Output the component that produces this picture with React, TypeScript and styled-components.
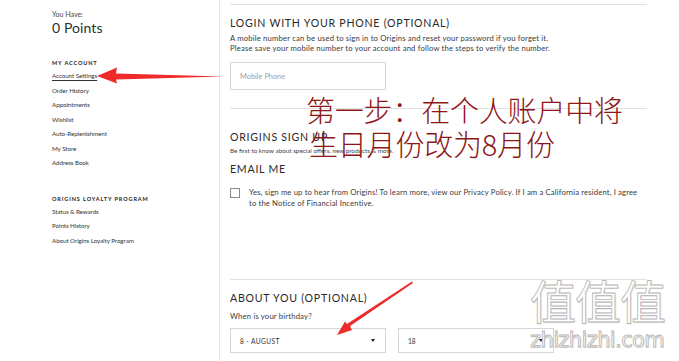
import React from 'react';
import styled, { createGlobalStyle } from 'styled-components';

const GlobalStyle = createGlobalStyle`
  html, body {
    margin: 0;
    padding: 0;
    background: #ffffff;
  }
  body {
    font-family: Lato, "Open Sans", "Liberation Sans", sans-serif;
    color: #333333;
    overflow: hidden;
  }
`;

// Page layout
const Page = styled.div`
  position: relative;
  display: flex;
  width: 679px;
  height: 361px;
  overflow: hidden;
`;

const Sidebar = styled.aside`
  width: 220px;
  flex-shrink: 0;
  box-sizing: border-box;
  padding: 10px 0 0 52px;
  border-right: 1px solid #e6e6e6;
`;

const Main = styled.main`
  width: 417px;
  margin-left: 10px;
  padding-top: 4px;
`;

// Sidebar parts
const SmallLabel = styled.div`
  font-size: 7px;
  line-height: 9px;
  color: #444;
`;

const Points = styled.div`
  font-size: 14px;
  line-height: 16px;
  color: #25352a;
  letter-spacing: 0.1px;
  margin-top: 1px;
`;

const NavGroup = styled.div<{ $gap: number }>`
  margin-top: ${({ $gap }) => $gap}px;
`;

const NavHeading = styled.div`
  font-size: 5.5px;
  line-height: 8px;
  font-weight: 700;
  letter-spacing: 0.9px;
  color: #222;
  margin-bottom: 2px;
`;

const NavLink = styled.div<{ $active?: boolean }>`
  font-size: 6.2px;
  line-height: 14.5px;
  color: #333;
  letter-spacing: -0.05px;
  span {
    text-decoration: ${({ $active }) => ($active ? 'underline' : 'none')};
    text-underline-offset: 1.5px;
  }
`;

// Main parts
const Section = styled.section<{ $top: number; $height: number }>`
  border-top: 1px solid #e2e2e2;
  padding-top: ${({ $top }) => $top}px;
  height: ${({ $height }) => $height}px;
  box-sizing: border-box;
`;

const Title = styled.h2<{ $mt?: number }>`
  margin: ${({ $mt }) => $mt ?? 0}px 0 0;
  font-size: 10.6px;
  line-height: 12px;
  font-weight: 400;
  letter-spacing: 0.75px;
  color: #2a2a2a;
`;

const Text = styled.p<{ $mt?: number }>`
  margin: ${({ $mt }) => $mt ?? 0}px 0 0;
  font-size: 7.7px;
  line-height: 10px;
  color: #3a3a3a;
  letter-spacing: 0.17px;
`;

const Tiny = styled.p`
  margin: 3px 0 0;
  font-size: 6.3px;
  line-height: 10px;
  color: #444;
`;

const Field = styled.div<{ $width: number; $height: number; $mt?: number }>`
  width: ${({ $width }) => $width}px;
  height: ${({ $height }) => $height}px;
  margin-top: ${({ $mt }) => $mt ?? 0}px;
  box-sizing: border-box;
  border: 1px solid #d6d6d6;
  display: flex;
  align-items: center;
  justify-content: space-between;
  padding: 0 10px 0 9px;
  font-size: 6.6px;
  color: #333;
`;

const Placeholder = styled.span`
  color: #a0a0a0;
  font-size: 7.4px;
`;

const Caret = styled.span`
  width: 0;
  height: 0;
  border-left: 2.5px solid transparent;
  border-right: 2.5px solid transparent;
  border-top: 3px solid #222;
`;

const CheckRow = styled.div`
  display: flex;
  gap: 9px;
  margin-top: 12px;
`;

const Box = styled.span`
  width: 8px;
  height: 8px;
  flex-shrink: 0;
  border: 1px solid #888;
  margin-top: 1px;
`;

const CheckText = styled.div`
  font-size: 7.7px;
  line-height: 11px;
  color: #3a3a3a;
  letter-spacing: 0.14px;
  width: 391px;
`;

const SelectRow = styled.div`
  display: flex;
  gap: 12px;
  margin-top: 7px;
`;

const Spaced = styled.span`
  letter-spacing: 0.4px;
`;

// Overlays (annotation on the screenshot)
const Annotation = styled.div`
  position: absolute;
  left: 306px;
  top: 92px;
  font-family: "Noto Sans CJK SC", sans-serif;
  font-weight: 300;
  font-size: 29px;
  line-height: 34px;
  color: #8e1616;
  letter-spacing: -0.2px;
  pointer-events: none;
`;

const Arrows = styled.svg`
  position: absolute;
  left: 0;
  top: 0;
  pointer-events: none;
`;

const Watermark = styled.div`
  position: absolute;
  left: 530px;
  top: 272px;
  color: #ffffff;
  -webkit-text-stroke: 0.8px #b4b4b4;
  text-shadow: 1px 1px 1px rgba(0, 0, 0, 0.12);
  pointer-events: none;
`;

const WmChars = styled.div`
  font-family: "Noto Sans CJK SC", sans-serif;
  font-size: 46px;
  line-height: 54px;
  font-weight: 400;
  letter-spacing: -1px;
`;

const WmSite = styled.div`
  font-family: "DejaVu Sans", sans-serif;
  font-size: 21px;
  line-height: 24px;
  letter-spacing: -0.6px;
  margin-top: 2px;
`;

const accountLinks = [
  'Account Settings',
  'Order History',
  'Appointments',
  'Wishlist',
  'Auto-Replenishment',
  'My Store',
  'Address Book',
];

const loyaltyLinks = ['Status & Rewards', 'Points History', 'About Origins Loyalty Program'];

const App: React.FC = () => {
  return (
    <>
      <GlobalStyle />
      <Page>
        <Sidebar>
          <SmallLabel>You Have:</SmallLabel>
          <Points>0 Points</Points>
          <NavGroup $gap={23}>
            <NavHeading>MY ACCOUNT</NavHeading>
            {accountLinks.map((l, i) => (
              <NavLink key={l} $active={i === 0}>
                <span>{l}</span>
              </NavLink>
            ))}
          </NavGroup>
          <NavGroup $gap={24}>
            <NavHeading>ORIGINS LOYALTY PROGRAM</NavHeading>
            {loyaltyLinks.map((l) => (
              <NavLink key={l}>
                <span>{l}</span>
              </NavLink>
            ))}
          </NavGroup>
        </Sidebar>

        <Main>
          <Section $top={12} $height={104}>
            <Title>LOGIN WITH YOUR PHONE (OPTIONAL)</Title>
            <Text $mt={4}>
              A mobile number can be used to sign in to Origins and reset your password if you forget it.
              <br />
              Please save your mobile number to your account and follow the steps to verify the number.
            </Text>
            <Field $width={156} $height={28} $mt={9}>
              <Placeholder>Mobile Phone</Placeholder>
            </Field>
          </Section>

          <Section $top={22} $height={171}>
            <Title>ORIGINS SIGN UP</Title>
            <Tiny>Be first to know about special offers, new products &amp; more.</Tiny>
            <Title $mt={7}>EMAIL ME</Title>
            <CheckRow>
              <Box />
              <CheckText>
                Yes, sign me up to hear from Origins! To learn more, view our Privacy Policy. If I am a California resident, I agree
                to the Notice of Financial Incentive.
              </CheckText>
            </CheckRow>
          </Section>

          <Section $top={12} $height={90}>
            <Title>ABOUT YOU (OPTIONAL)</Title>
            <Text $mt={7}>When is your birthday?</Text>
            <SelectRow>
              <Field $width={156} $height={25}>
                <Spaced>8 - AUGUST</Spaced>
                <Caret />
              </Field>
              <Field $width={156} $height={25}>
                <span>18</span>
                <Caret />
              </Field>
            </SelectRow>
          </Section>
        </Main>

        <Annotation>
          第一步：在个人账户中将
          <br />
          <span style={{ marginLeft: 3 }}>生日月份改为8月份</span>
        </Annotation>

        <Watermark>
          <WmChars>值值值</WmChars>
          <WmSite>zhizhizhi.com</WmSite>
        </Watermark>

        <Arrows width="679" height="361" viewBox="0 0 679 361">
          {/* arrow to Account Settings */}
          <polygon points="223,76.5 116,73.5 117,67.5 97,76 117,83.5 116,79.5" fill="#ee2a2a" />
          {/* arrow to month select */}
          <polygon points="412,281.5 413,283 350,326 352,330 337,335 345,321.5 347,324" fill="#ee2a2a" />
        </Arrows>
      </Page>
    </>
  );
};

export default App;
